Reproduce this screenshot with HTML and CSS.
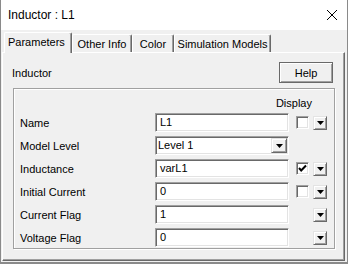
FILE: index.html
```html
<!DOCTYPE html>
<html lang="en">
  <head>
    <title>Inductor : L1</title>
    <meta charset="UTF-8" />
    <link rel="stylesheet" href="styles.css">
  </head>
  <body>
    <div class="window">
      <div class="titlebar">
        <span class="title">Inductor : L1</span>
        <svg class="close" width="10" height="10" viewBox="0 0 10 10">
          <path d="M0 0 L10 10 M10 0 L0 10" stroke="#000" stroke-width="1" fill="none"/>
        </svg>
      </div>

      <div class="content">
        <ul class="tabs">
          <li class="tab active tab-params">Parameters</li>
          <li class="tab tab-other">Other Info</li>
          <li class="tab tab-color">Color</li>
          <li class="tab tab-sim">Simulation Models</li>
        </ul>

        <div class="panel">
          <div class="panel-head">
            <span>Inductor</span>
            <button class="btn help">Help</button>
          </div>

          <div class="frame">
            <div class="display-head">Display</div>
            <div class="rows">
              <div class="row">
                <label>Name</label>
                <div class="field">L1</div>
                <span class="check"></span>
                <span class="btn arrow-btn"><svg width="7" height="4"><polygon points="0,0 7,0 3.5,4" fill="#000"/></svg></span>
              </div>
              <div class="row">
                <label>Model Level</label>
                <div class="field select">
                  <span>Level 1</span>
                  <span class="btn drop"><svg width="7" height="4"><polygon points="0,0 7,0 3.5,4" fill="#000"/></svg></span>
                </div>
              </div>
              <div class="row">
                <label>Inductance</label>
                <div class="field">varL1</div>
                <span class="check">
                  <svg width="9" height="9" viewBox="0 0 9 9"><path d="M1 4 L3.2 6.5 L8 1.5" stroke="#000" stroke-width="2" fill="none"/></svg>
                </span>
                <span class="btn arrow-btn"><svg width="7" height="4"><polygon points="0,0 7,0 3.5,4" fill="#000"/></svg></span>
              </div>
              <div class="row">
                <label>Initial Current</label>
                <div class="field">0</div>
                <span class="check"></span>
                <span class="btn arrow-btn"><svg width="7" height="4"><polygon points="0,0 7,0 3.5,4" fill="#000"/></svg></span>
              </div>
              <div class="row">
                <label>Current Flag</label>
                <div class="field">1</div>
                <span></span>
                <span class="btn arrow-btn"><svg width="7" height="4"><polygon points="0,0 7,0 3.5,4" fill="#000"/></svg></span>
              </div>
              <div class="row">
                <label>Voltage Flag</label>
                <div class="field">0</div>
                <span></span>
                <span class="btn arrow-btn"><svg width="7" height="4"><polygon points="0,0 7,0 3.5,4" fill="#000"/></svg></span>
              </div>
            </div>
          </div>
        </div>
      </div>
    </div>
  </body>
</html>
```

FILE: styles.css
```css
* {
  box-sizing: border-box;
}
body {
  margin: 0;
  background: #ffffff;
  font-family: "Liberation Sans", Arial, sans-serif;
  font-size: 11px;
  color: #000;
}
.window {
  width: 348px;
  height: 264px;
  background: #f0f0f0;
  border: 1px solid #8a8a8a;
  border-top: none;
  border-bottom: 2px solid #8a8a8a;
  display: flex;
  flex-direction: column;
}
.titlebar {
  height: 30px;
  flex: none;
  background: #ffffff;
  display: flex;
  align-items: center;
  justify-content: space-between;
  padding: 0 10px 0 7px;
}
.title {
  font-size: 12px;
}
.close {
  display: block;
}
.content {
  flex: 1;
  display: flex;
  flex-direction: column;
  padding: 2px 2px 1px 1px;
}

/* tabs */
.tabs {
  list-style: none;
  margin: 0 0 0 2px;
  padding: 0;
  height: 20px;
  display: flex;
  align-items: flex-end;
  position: relative;
  z-index: 1;
}
.tab {
  height: 18px;
  padding-top: 2px;
  line-height: 14px;
  text-align: center;
  white-space: nowrap;
  border-top: 1px solid #ffffff;
  border-left: 1px solid #ffffff;
  border-right: 1px solid #696969;
  border-radius: 2px 2px 0 0;
  box-shadow: inset -1px 0 0 #a0a0a0;
  background: #f0f0f0;
}
.tab.active {
  height: 21px;
  margin-bottom: -1px;
  text-align: left;
  padding-left: 3px;
}
.tab-params { width: 68px; }
.tab-other { width: 60px; }
.tab-color { width: 42px; }
.tab-sim { width: 97px; }

/* panel */
.panel {
  flex: 1;
  border-top: 1px solid #ffffff;
  border-left: 1px solid #ffffff;
  border-right: 1px solid #696969;
  border-bottom: 1px solid #696969;
  box-shadow: inset -1px -1px 0 #a0a0a0;
}
.panel-head {
  display: flex;
  align-items: center;
  justify-content: space-between;
  padding: 9px 11px 0 9px;
}
.btn {
  background: #f0f0f0;
  border: 1px solid;
  border-color: #e3e3e3 #696969 #696969 #e3e3e3;
  box-shadow: inset 1px 1px 0 #ffffff, inset -1px -1px 0 #a0a0a0;
  display: flex;
  align-items: center;
  justify-content: center;
  padding: 0;
}
.btn svg {
  display: block;
}
.help {
  width: 54px;
  height: 21px;
  font: inherit;
  color: #000;
  border-color: #696969;
}

/* sunken group frame */
.frame {
  margin: 5px 0 0 10px;
  width: 322px;
  height: 161px;
  border: 1px solid #a0a0a0;
  box-shadow: inset 1px 1px 0 #ffffff, 1px 1px 0 #ffffff;
  padding: 7px 0 1px 0;
}
.display-head {
  line-height: 14px;
  text-align: right;
  padding-right: 22px;
}
.rows {
  margin-top: 3px;
  display: flex;
  flex-direction: column;
  gap: 4px;
}
.row {
  display: grid;
  grid-template-columns: 135px 134px 20px 18px;
  align-items: center;
  height: 19px;
  padding-left: 6px;
}
.field {
  height: 19px;
  background: #ffffff;
  border: 1px solid;
  border-color: #a0a0a0 #ffffff #ffffff #a0a0a0;
  box-shadow: inset 1px 1px 0 #696969, inset -1px -1px 0 #e3e3e3;
  padding-left: 4px;
  line-height: 17px;
  white-space: nowrap;
}
.field.select {
  display: flex;
  justify-content: space-between;
  padding: 1px 1px 1px 2px;
  line-height: 15px;
}
.drop {
  width: 16px;
  height: 15px;
}
.check {
  justify-self: end;
  width: 13px;
  height: 13px;
  background: #ffffff;
  border: 1px solid;
  border-color: #a0a0a0 #ffffff #ffffff #a0a0a0;
  box-shadow: inset 1px 1px 0 #696969, inset -1px -1px 0 #e3e3e3;
  display: flex;
  align-items: center;
  justify-content: center;
}
.check svg {
  display: block;
}
.arrow-btn {
  justify-self: end;
  width: 14px;
  height: 14px;
}
```
